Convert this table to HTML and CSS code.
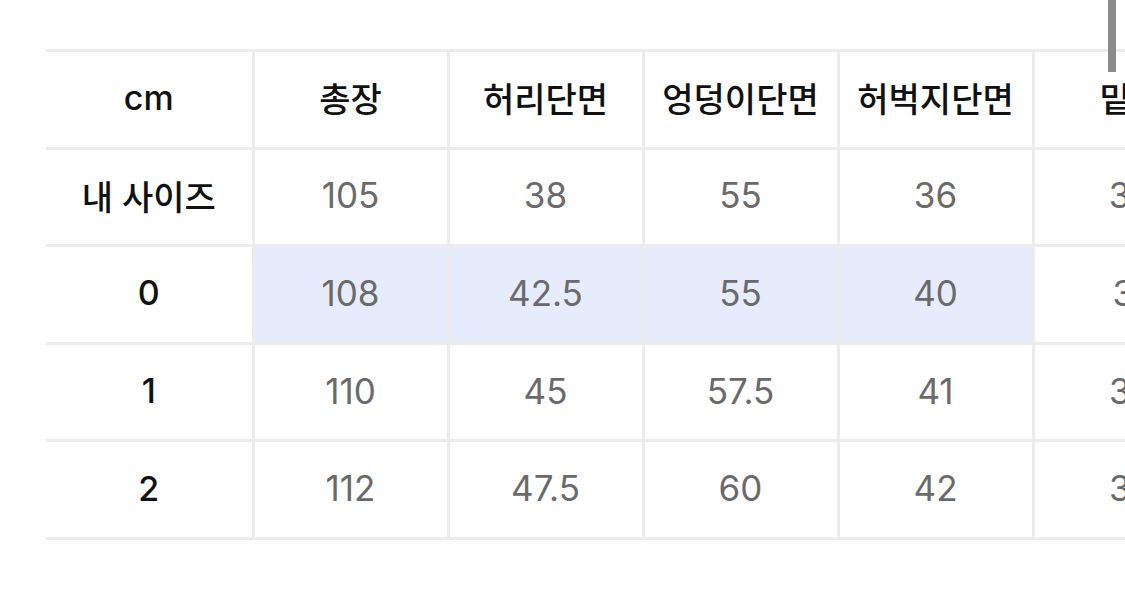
FILE: index.html
```html
<!DOCTYPE html>
<html lang="ko">
<head>
<meta charset="utf-8">
<title>사이즈 표</title>
<link rel="stylesheet" href="styles.css">
</head>
<body>
<div class="wrap">
  <table class="size-table">
    <colgroup>
      <col class="col-label">
      <col class="col-val"><col class="col-val"><col class="col-val"><col class="col-val"><col class="col-val">
    </colgroup>
    <thead>
      <tr>
        <th>cm</th><th>총장</th><th>허리단면</th><th>엉덩이단면</th><th>허벅지단면</th><th>밑위</th>
      </tr>
    </thead>
    <tbody>
      <tr>
        <th>내 사이즈</th><td>105</td><td>38</td><td>55</td><td>36</td><td>30</td>
      </tr>
      <tr class="hl">
        <th>0</th><td>108</td><td>42.5</td><td>55</td><td>40</td><td class="no-hl">31</td>
      </tr>
      <tr>
        <th>1</th><td>110</td><td>45</td><td>57.5</td><td>41</td><td>32</td>
      </tr>
      <tr>
        <th>2</th><td>112</td><td>47.5</td><td>60</td><td>42</td><td>33</td>
      </tr>
    </tbody>
  </table>
</div>
<div class="scroll-thumb"></div>
</body>
</html>
```
FILE: styles.css
```css
html, body {
  margin: 0;
  padding: 0;
  background: #ffffff;
  overflow: hidden;
  width: 1125px;
  height: 593px;
}

body {
  font-family: "Inter", "Noto Sans CJK KR", sans-serif;
  position: relative;
}

.wrap {
  padding: 49px 0 0 46px;
}

.size-table {
  border-collapse: collapse;
  table-layout: fixed;
  width: 1182px;
}

.col-label { width: 207px; }
.col-val { width: 195px; }

.size-table th,
.size-table td {
  height: 91.6px;
  padding: 0 0 3px 0;
  text-align: center;
  vertical-align: middle;
  border: 3px solid #ececec;
  font-size: 34px;
  white-space: nowrap;
  overflow: hidden;
}

.size-table tr > :first-child {
  border-left: none;
}

.size-table th {
  color: #111111;
  font-weight: 500;
}

.size-table td {
  color: #6a6a6a;
  font-weight: 400;
  font-size: 35px;
}

.size-table tr.hl td {
  background: #e7ecfc;
}

.size-table tr.hl td.no-hl {
  background: #ffffff;
}

.scroll-thumb {
  position: absolute;
  top: 0;
  left: 1108px;
  width: 8px;
  height: 72px;
  background: #8c8c8c;
}
```
